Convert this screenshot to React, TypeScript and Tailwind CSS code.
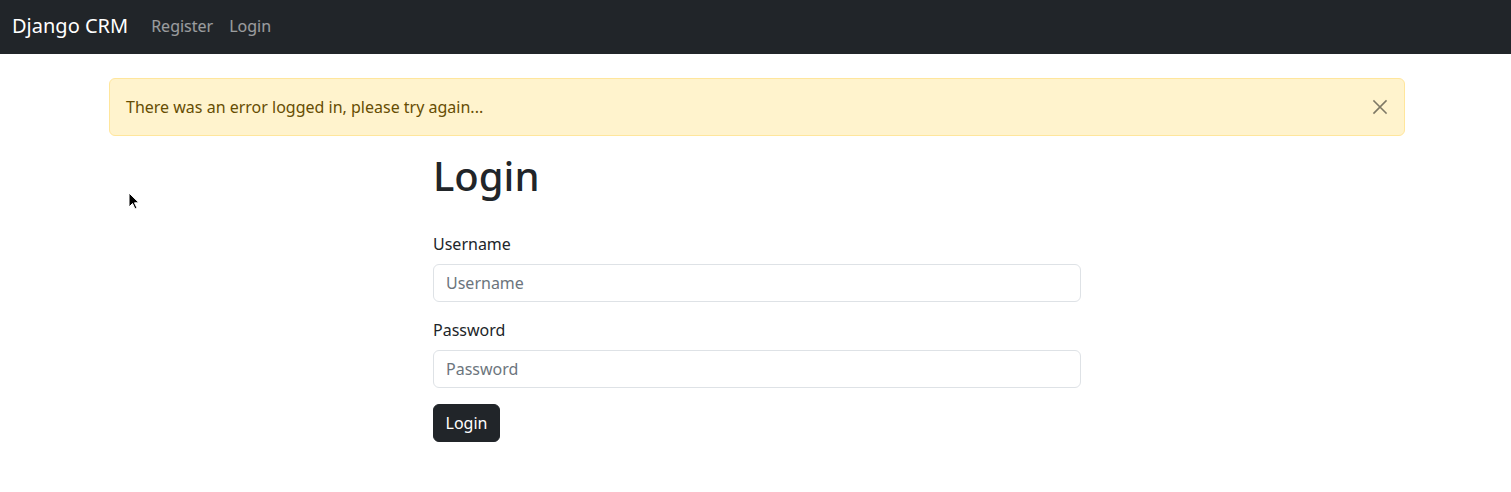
import { useState } from "react";

function CloseIcon() {
  return (
    <svg width="16" height="16" viewBox="0 0 16 16" fill="none" stroke="#000" strokeWidth="1.6" strokeLinecap="square">
      <path d="M2 2l12 12M14 2L2 14" />
    </svg>
  );
}

function Cursor() {
  return (
    <svg className="absolute left-[128px] top-[192px]" width="12" height="18" viewBox="0 0 12 18">
      <path d="M1 1v14l3.5-3.5 2.5 5.5 2-1-2.5-5.2H11z" fill="#000" stroke="#fff" strokeWidth="1" />
    </svg>
  );
}

function Field({ label, type }: { label: string; type: string }) {
  return (
    <div className="mb-4">
      <label className="block mb-2 leading-6">{label}</label>
      <input
        type={type}
        placeholder={label}
        className="block w-full h-[38px] px-3 border border-[#dee2e6] rounded-md text-[16px] text-[#212529] placeholder:text-[#6c757d] outline-none"
      />
    </div>
  );
}

export default function App() {
  const [showAlert, setShowAlert] = useState(true);
  return (
    <div className="relative min-h-[492px] bg-white text-[#212529] text-[16px] leading-6" style={{ fontFamily: '"Noto Sans", "Open Sans", sans-serif' }}>
      <nav className="h-[54px] bg-[#212529] flex items-center px-3 pb-[2px]">
        <a href="#" className="text-[20px] text-white mr-[15px] leading-[30px]">Django CRM</a>
        <a href="#" className="px-2 text-white/55">Register</a>
        <a href="#" className="px-2 text-white/55">Login</a>
      </nav>
      <div className="ml-[109px] w-[1296px] pt-6">
        {showAlert && (
          <div className="flex items-center justify-between bg-[#fff3cd] border border-[#ffe69c] rounded-md text-[#664d03] py-4 pl-4 pr-4 mb-4">
            <span>There was an error logged in, please try again...</span>
            <button onClick={() => setShowAlert(false)} className="opacity-50">
              <CloseIcon />
            </button>
          </div>
        )}
        <div className="ml-[324px] w-[648px]">
          <h1 className="text-[40px] font-medium leading-[48px] mb-[32px]">Login</h1>
          <form onSubmit={(e) => e.preventDefault()}>
            <Field label="Username" type="text" />
            <Field label="Password" type="password" />
            <button type="submit" className="h-[38px] w-[67px] border border-[#212529] bg-[#212529] text-white rounded-md">Login</button>
          </form>
        </div>
      </div>
      <Cursor />
    </div>
  );
}
